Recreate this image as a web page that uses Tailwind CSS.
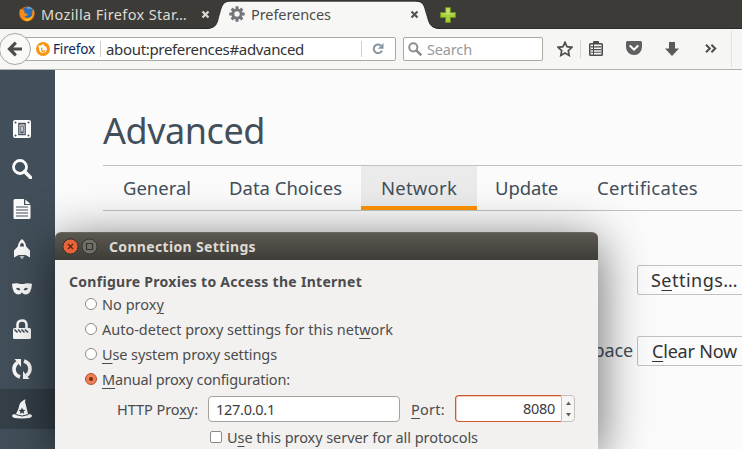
<!DOCTYPE html>
<html lang="en">
<head>
<meta charset="utf-8">
<title>Preferences</title>
<script src="https://cdn.jsdelivr.net/npm/@tailwindcss/browser@4"></script>
</head>
<body class="relative w-[742px] h-[449px] overflow-hidden bg-[#fbfbfb] font-['Noto_Sans','Open_Sans',sans-serif] text-[14.5px] leading-5 text-[#4c4c4c] whitespace-nowrap">

<!-- tab strip -->
<header class="relative h-[29px] bg-[#3c3b37] border-b border-[#2c2b28] flex">
  <div class="w-[229px] h-[28px] pl-[19px] pr-[19px] flex items-center shrink-0 text-[#dfdbd2]">
    <svg class="w-4 h-4 mr-[6px] shrink-0" viewBox="0 0 16 16"><circle cx="8" cy="8" r="7.6" fill="#e66000"/><circle cx="8.6" cy="6.4" r="5.4" fill="#2a6fb5"/><path d="M8 1q4-1 6 3-3-2-6-1z" fill="#5aa7dc"/><path d="M1 3q2 1 4 1 1 1 0 2 1 2 4 2-1 3-4 2 3 4 7 1 2-2 1-5 2-2 1-4 3 5 0 9-4 5-9 3Q-1 11 1 3z" fill="#f28c1c"/><path d="M4 12q5 3 10-3-2 6-7 6z" fill="#ffc928"/></svg>
    <span data-w="146">Mozilla Firefox Star…</span>
    <svg class="w-[9px] h-[9px] ml-auto shrink-0" viewBox="0 0 9 9"><path d="M1.5 1.5l6 6M7.5 1.5l-6 6" stroke="#dfdbd2" stroke-width="2.2"/></svg>
  </div>
  <svg class="absolute left-[205px] top-0 w-[240px] h-[29px]" viewBox="0 0 240 29"><path d="M0 29C13 29 12 22 14.500 14C17 5 18 1.500 26 1.500H210C219 1.500 219 6 221.500 14C224 22 224 29 236 29Z" fill="#f7f7f5"/><path d="M0 28.500C13 28.500 12 22 14.500 14C17 5 18 1 26 1H210C219 1 219 6 221.500 14C224 22 224 28.500 236 28.500" fill="none" stroke="#292825" stroke-width=".8"/></svg>
  <div class="relative w-[200px] h-[28px] flex items-center shrink-0">
    <svg class="w-4 h-4 mr-[6px] shrink-0" viewBox="0 0 16 16"><g stroke="#75757a" stroke-width="3"><path d="M8 .3v15.400M.3 8h15.400M2.600 2.600l10.800 10.800M13.400 2.600L2.600 13.400"/></g><circle cx="8" cy="8" r="5.600" fill="#75757a"/><circle cx="8" cy="8" r="2.700" fill="#f7f7f5"/></svg>
    <span data-w="80">Preferences</span>
    <svg class="w-[9px] h-[9px] ml-auto mr-[10px] shrink-0" viewBox="0 0 9 9"><path d="M1.500 1.500l6 6M7.500 1.500l-6 6" stroke="#55544f" stroke-width="2.200"/></svg>
  </div>
  <svg class="w-4 h-4 ml-[11px] mt-[7px] shrink-0" viewBox="0 0 16 16"><path d="M5.500.5h5v5h5v5h-5v5h-5v-5h-5v-5h5z" fill="#a6ce38" stroke="#668f1e"/><path d="M6.500 1.500h3v5h5v1h-13v-1h5z" fill="#c4e06c"/></svg>
</header>

<!-- navigation toolbar -->
<nav class="relative h-[41px] bg-[#f6f6f4] border-b border-[#b2b2aa] flex items-start">
  <div class="ml-[15px] mt-[8px] w-[381px] h-6 border border-[#aaaaa2] rounded-[2px] bg-white flex items-center shrink-0">
    <svg class="w-[14px] h-[14px] ml-[20px] shrink-0" viewBox="0 0 14 14"><circle cx="7" cy="7" r="7" fill="#f6960f"/><path d="M2.500 3.200q1.600.6 2.500.2Q6.500 1.500 8 2q-1 1 .3 1.700Q11.500 5 10.800 8.300 10 11 7.200 11 3.700 11 3.300 7.500z" fill="#fff"/><path d="M5 5.500q1.500 0 1.500 1.300Q5.300 8 7 8.600q2 .4 2.300-1.500.6 3-2 3.200Q4.500 10 5 5.500z" fill="#f6960f"/></svg>
    <span class="ml-[3px] text-[13.500px] text-[#0c2a5c]" data-w="42">Firefox</span>
    <i class="w-px h-4 bg-[#d0d0d0] ml-[5px] mr-[5px]"></i>
    <span class="text-[15px] text-[#333]" data-w="198">about:preferences#advanced</span>
    <i class="w-px h-4 bg-[#d0d0d0] ml-auto"></i>
    <svg class="w-3 h-3 ml-[10px] mr-[11px] shrink-0" viewBox="0 0 12 12"><path d="M8.800 2.500A4.300 4.300 0 1 0 10 7.600" fill="none" stroke="#8494a0" stroke-width="2"/><path d="M11.500 0v5.700H5.800z" fill="#8494a0"/></svg>
  </div>
  <div class="ml-[7px] mt-[8px] w-[140px] h-6 border border-[#aaaaa2] rounded-[2px] bg-white flex items-center shrink-0">
    <svg class="w-[14px] h-[14px] ml-1 shrink-0" viewBox="0 0 14 14"><circle cx="5.300" cy="5.300" r="4.100" fill="none" stroke="#8e8e8c" stroke-width="2"/><path d="M8.300 8.300l5 5" stroke="#8e8e8c" stroke-width="2.600"/></svg>
    <span class="ml-[5px] text-[#999]" data-w="45">Search</span>
  </div>
  <svg class="w-4 h-4 ml-[14px] mt-[12px] shrink-0" viewBox="0 0 16 16"><path d="M8 1.300l2 4.400 4.900.6-3.600 3.300.9 4.900L8 12.100l-4.200 2.400.9-4.900L1.100 6.300 6 5.700z" fill="none" stroke="#4f4f4f" stroke-width="1.700"/></svg>
  <i class="w-px h-[18px] bg-[#d5d5d2] ml-[7px] mt-[11px]"></i>
  <svg class="w-[14px] h-[15px] ml-[8px] mt-[12px] shrink-0" viewBox="0 0 14 15"><path d="M1.500 2.800h11q.7 0 .7.700v10q0 .7-.7.700h-11q-.7 0-.7-.7v-10q0-.7.700-.7z" fill="#f6f6f4" stroke="#4c4c4c" stroke-width="1.600"/><path d="M4 3V1q0-1 1-1h4q1 0 1 1v2z" fill="#4c4c4c"/><path d="M2 5.900h10M2 8.600h10M2 11.300h10" stroke="#4c4c4c" stroke-width="1.100"/><path d="M4.500 3v11" stroke="#4c4c4c" stroke-width="1"/></svg>
  <svg class="w-4 h-[14px] ml-[23px] mt-[12px] shrink-0" viewBox="0 0 16 14"><path d="M1.500 0h13Q16 0 16 1.500V6q0 3.300-2.300 5.700T8 14t-5.700-2.300T0 6V1.500Q0 0 1.500 0z" fill="#606060"/><path d="M4.300 5L8 8.600 11.700 5" fill="none" stroke="#fff" stroke-width="2" stroke-linecap="round"/></svg>
  <svg class="w-[14px] h-[14px] ml-[23px] mt-[13px] shrink-0" viewBox="0 0 14 14"><path d="M4 0h6v6.500h4L7 14 0 6.500h4z" fill="#5a5a5a"/></svg>
  <svg class="w-[12px] h-[9px] ml-[26px] mt-[15px] shrink-0" viewBox="0 0 12 9"><path d="M1 .7l3.800 3.800L1 8.300M6.400.7l3.800 3.800-3.800 3.800" fill="none" stroke="#4c4c4c" stroke-width="2"/></svg>
  <i class="w-px h-9 bg-[#e2e2df] ml-[14px] mt-[2px]"></i>
  <!-- back button overlaps the location bar -->
  <svg class="absolute left-0 top-[4px] w-8 h-8" viewBox="0 0 32 32"><circle cx="15" cy="16" r="15.500" fill="#f9f9f8" stroke="#a8a8a2"/><path d="M22 16H10.500M15.800 9.700L9.500 16l6.300 6.300" fill="none" stroke="#4c4c4c" stroke-width="3.200"/></svg>
</nav>

<div class="flex h-[379px]">
  <!-- categories -->
  <aside class="w-[55px] shrink-0 pt-[39px] bg-[#424f5a] flex flex-col text-[#fbfbfb] [&>div]:h-10 [&>div]:pl-[12px] [&>div]:flex [&>div]:items-center [&_svg]:w-5 [&_svg]:h-5">
    <div><svg viewBox="0 0 20 20" fill="currentColor"><rect x="1" y="1" width="18" height="18" rx="2"/><path d="M6.200 3.800h7.600v12.400H6.200z" fill="#424f5a"/><path d="M7.500 5.500h5V15h-5z" fill="#fbfbfb"/><path d="M8.300 6.500h3.400v8H8.300z" fill="#424f5a"/><path d="M9.300 7.500h1.400v5H9.300z" fill="#fbfbfb"/><g fill="#424f5a"><circle cx="3.500" cy="3.500" r="1"/><circle cx="16.500" cy="3.500" r="1"/><circle cx="3.500" cy="16.500" r="1"/><circle cx="16.500" cy="16.500" r="1"/></g></svg></div>
    <div><svg viewBox="0 0 20 20" fill="none" stroke="currentColor"><circle cx="8" cy="8" r="6.500" stroke-width="2.800"/><path d="M12.500 12.500l6 6" stroke-width="3.500" stroke-linecap="round"/></svg></div>
    <div><svg viewBox="0 0 20 20" fill="currentColor"><path d="M3 0h9v6h6.500v12.500q0 1.500-1.500 1.500H3q-1.500 0-1.500-1.500v-17Q1.500 0 3 0zM13.300.5l5 4.500h-5z"/><path d="M4 8h12M4 11h12M4 14h12M4 17h12" stroke="#424f5a" stroke-width="1.200"/></svg></div>
    <div><svg viewBox="0 0 20 20" fill="currentColor"><path d="M10 0q3.500 2.500 4.200 7.500l3.800 4V18.500l-4.500-2.500h-7L2 18.500v-7l3.800-4Q6.500 2.500 10 0z"/><path d="M8 7.500q0-3.500 2-3.500t2 3.500z" fill="#424f5a"/><path d="M7.500 17h5L10 20.500z" opacity=".65"/></svg></div>
    <div><svg viewBox="0 0 20 20" fill="currentColor"><path d="M0 4.800q5.500-1.300 8 .2h4q2.500-1.500 8-.2-.5 10.700-6.500 10.700-2 0-3.500-2-1.500 2-3.500 2Q.5 15.500 0 4.800z"/><path d="M4 9.200q3-1.500 4.500 1.500Q5.500 12.500 4 9.200zM16 9.200q-3-1.500-4.500 1.500Q14.500 12.500 16 9.200z" fill="#424f5a"/></svg></div>
    <div><svg viewBox="0 0 20 20"><path d="M5.500 10V6Q5.500 1.500 10 1.500T14.500 6v4" fill="none" stroke="currentColor" stroke-width="2.600"/><rect x="1" y="9" width="18" height="11" rx="1.500" fill="currentColor"/><path d="M2.500 10.500l3 3M6 10.500l3 3M9.500 10.500l3 3M13 10.500l3 3" stroke="#424f5a" stroke-width="1.600"/></svg></div>
    <div><svg viewBox="0 0 20 20" fill="none" stroke="currentColor" stroke-width="3.600"><path d="M8 18Q2 16 2 10q0-4 3.500-6.500M12 2q6 2 6 8 0 4-3.500 6.500"/><path d="M2.500 0H9v8zM17.500 20H11v-8z" fill="currentColor" stroke="none"/></svg></div>
    <div class="bg-[#343f48]"><svg viewBox="0 0 20 20" fill="currentColor"><path d="M4 15Q7 10 7.500 5.500 9 2 13.500.3q-1 2.200.3 5.200L16 15q4 0 4 2 0 2.500-10 2.500T0 17q0-2 4-2z"/><path d="M3.500 15.500Q10 18.500 16.500 15.500" stroke="#343f48" fill="none"/><path d="M10 8.500l1 2.200 2.400.2-1.800 1.600.5 2.400-2.100-1.300-2.100 1.300.5-2.400-1.800-1.600 2.400-.2z" fill="#343f48"/></svg></div>
  </aside>

  <main class="w-[687px] shrink-0 pl-[48px] text-[#424f5a] overflow-hidden">
    <h1 class="pt-[37px] h-[95px] text-[36px] leading-[48px]"><span data-w="162">Advanced</span></h1>
    <div class="h-[46px] border-y border-[#c1c1c1] flex text-[18.500px] leading-[44px]">
      <div class="w-[107px] pl-5"><span data-w="68">General</span></div>
      <div class="w-[151px] pl-[19px]"><span data-w="113">Data Choices</span></div>
      <div class="w-[116px] pl-5 bg-[#ebebeb] shadow-[inset_0_-4px_0_#ff9500]"><span data-w="76">Network</span></div>
      <div class="w-[100px] pl-[18px]"><span data-w="63">Update</span></div>
      <div class="pl-5"><span data-w="101">Certificates</span></div>
    </div>
    <div class="pt-[54px] flex flex-col gap-[41px] text-[18px] leading-7">
      <div class="flex justify-end"><div class="w-[120px] h-[30px] -mr-[15px] border border-[#c1c1c1] rounded-[2px] bg-[#fbfbfb] pl-[13px] text-[#333]"><span data-w="87">S<u class="underline-offset-[3px] decoration-1">e</u>ttings…</span></div></div>
      <div class="flex justify-end"><span class="mr-1"><span data-w="48">space</span></span><div class="w-[120px] h-[30px] -mr-[15px] border border-[#c1c1c1] rounded-[2px] bg-[#fbfbfb] pl-[14px] text-[#333]"><span data-w="85"><u class="underline-offset-[3px] decoration-1">C</u>lear Now</span></div></div>
    </div>
  </main>
</div>

<!-- connection dialog -->
<section class="absolute left-[55px] top-[232px] w-[543px] h-[217px] rounded-t-[6px] bg-[#f2f1f0] shadow-[0_10px_50px_rgba(0,0,0,0.62)] [&_u]:underline-offset-[3px] [&_u]:decoration-1">
  <div class="h-7 rounded-t-[6px] bg-linear-to-b from-[#5b5850] to-[#3e3d38] border-t border-[#6a675e] flex items-center pl-[7px]">
    <svg class="w-[17px] h-[17px]" viewBox="0 0 17 17"><circle cx="8.500" cy="8.500" r="7.600" fill="#e9633a" stroke="#33312c"/><path d="M6 6l5 5M11 6l-5 5" stroke="#5c2310" stroke-width="1.300"/></svg>
    <svg class="w-[17px] h-[17px] ml-[2px]" viewBox="0 0 17 17"><circle cx="8.500" cy="8.500" r="7.600" fill="#716f67" stroke="#33312c"/><path d="M5.500 5.500h6v6h-6z" stroke="#34332e" fill="none" stroke-width="1.200"/></svg>
    <b class="ml-[11px] text-[#dfdbd2] text-[14px]"><span data-w="147">Connection Settings</span></b>
  </div>
  <div class="pt-[12px] pl-[14px]">
    <b class="block h-5 text-[14px]"><span data-w="293">Configure Proxies to Access the Internet</span></b>
    <div class="pl-[16px] flex flex-col [&>div]:h-[25px] [&>div]:flex [&>div]:items-center [&_svg]:w-3 [&_svg]:h-3 [&_svg]:mr-[5px] [&_svg]:-mt-px [&>div>span]:-mt-[2px]">
      <div><svg viewBox="0 0 12 12"><circle cx="6" cy="6" r="5.500" fill="#fff" stroke="#8c8984"/></svg><span data-w="62">No prox<u>y</u></span></div>
      <div><svg viewBox="0 0 12 12"><circle cx="6" cy="6" r="5.500" fill="#fff" stroke="#8c8984"/></svg><span data-w="291">Auto-detect proxy settings for this net<u>w</u>ork</span></div>
      <div><svg viewBox="0 0 12 12"><circle cx="6" cy="6" r="5.500" fill="#fff" stroke="#8c8984"/></svg><span data-w="175"><u>U</u>se system proxy settings</span></div>
      <div><svg viewBox="0 0 12 12"><circle cx="6" cy="6" r="5.500" fill="#f07f55" stroke="#b5512d"/><circle cx="6" cy="6" r="2" fill="#702d14"/></svg><span data-w="188"><u>M</u>anual proxy configuration:</span></div>
    </div>
    <div class="flex items-center h-[27px] mt-[3px] pl-[48px]">
      <span data-w="81">HTTP Pro<u>x</u>y:</span>
      <div class="ml-[10px] w-[192px] h-[26px] border border-[#a5a29d] rounded-[4px] bg-white pl-[7px] leading-6 text-[#3c3c3c]"><span data-w="59">127.0.0.1</span></div>
      <span class="ml-[11px]" data-w="34"><u>P</u>ort:</span>
      <div class="ml-[10px] w-[106px] h-[27px] border border-r-0 border-[#cb5830] rounded-l-[4px] bg-white text-right pr-[6px] leading-[25px] text-[#3c3c3c] shadow-[inset_1px_1px_#f3c9b8]"><span data-w="32">8080</span></div>
      <svg class="w-[14px] h-[27px]" viewBox="0 0 14 27"><path d="M.5.500H10Q13.500.5 13.500 4v19q0 3.500-3.500 3.500H.500z" fill="#f7f6f5" stroke="#c3c1bd"/><path d="M5 10l2.500-3.500L10 10zM5 18l2.500 3.500L10 18z" fill="#5e5e5e"/></svg>
    </div>
    <div class="flex items-center h-[27px] pl-[141px] pt-[2px]">
      <i class="w-3 h-3 border border-[#8c8984] rounded-[2px] bg-white mr-[5px]"></i><span data-w="251">U<u>s</u>e this proxy server for all protocols</span>
    </div>
  </div>
</section>

<script>
// Track each label so that it fills its nominal width.
function fitLabels() {
  document.querySelectorAll('[data-w]').forEach(function (el) {
    el.style.letterSpacing = '0px';
    var extra = el.dataset.w - el.getBoundingClientRect().width;
    el.style.letterSpacing = (extra / el.textContent.length) + 'px';
  });
}
window.addEventListener('load', function () {
  fitLabels();
  document.fonts.ready.then(fitLabels);
});
</script>
</body>
</html>
